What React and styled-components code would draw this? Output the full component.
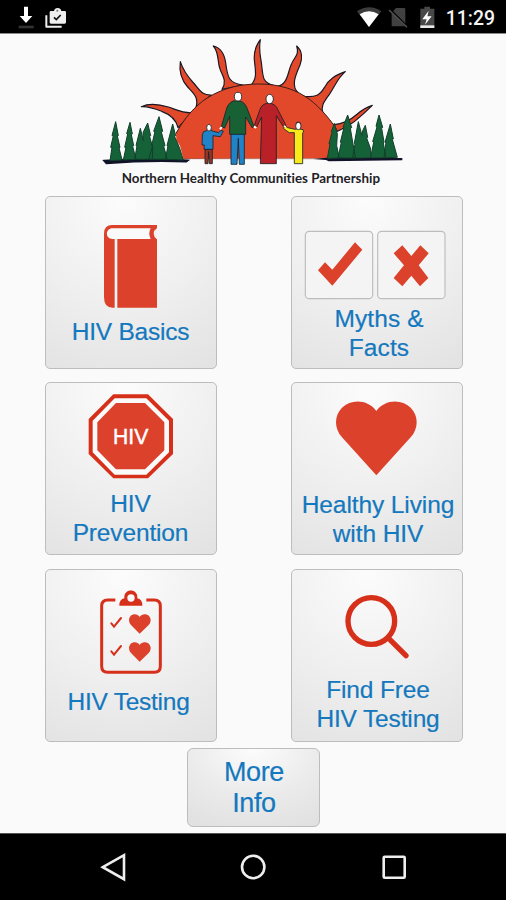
import React from "react";
import styled, { createGlobalStyle } from "styled-components";

const GlobalStyle = createGlobalStyle`
  * {
    box-sizing: border-box;
  }
  body {
    margin: 0;
    background-color: #fafafa;
    font-family: "Liberation Sans", Arial, sans-serif;
  }
`;

const Page = styled.div`
  display: flex;
  flex-direction: column;
  width: 506px;
  height: 900px;
  overflow: hidden;
  background-color: #fafafa;
`;

const StatusBar = styled.header`
  display: flex;
  justify-content: space-between;
  height: 34px;
  padding: 0 11px 0 16px;
  background-color: #000;
  border-bottom: 1px solid #8d8989;
`;

const StatusGroup = styled.div`
  display: flex;
`;

const Clock = styled.span`
  margin-left: 7px;
  font-family: Roboto, sans-serif;
  font-size: 19.4px;
  font-weight: 500;
  line-height: 37px;
  color: #f4f4f4;
`;

const Main = styled.main`
  display: flex;
  flex: 1;
  flex-direction: column;
  align-items: center;
`;

const Logo = styled.svg`
  width: 310px;
  height: 162px;
  margin-left: 4px;
  flex-shrink: 0;
`;

const Grid = styled.div`
  display: grid;
  grid-template-columns: 172px 172px;
  grid-template-rows: 186px 187px 179px;
  column-gap: 74px;
  margin-left: 2px;
`;

const Card = styled.button`
  display: flex;
  flex-direction: column;
  align-items: center;
  width: 172px;
  height: 173px;
  padding: 0;
  border: 1px solid #bdbdbd;
  border-radius: 5px;
  background: radial-gradient(ellipse 115% 125% at 45% 0, #fcfcfc 0%, #efefef 50%, #e0e0e0 100%);
  font-family: inherit;
`;

const SmallCard = styled(Card)`
  width: 133px;
  height: 79px;
  padding-top: 8px;
  border-radius: 6px;
  background: radial-gradient(ellipse 100% 120% at 50% 0, #fcfcfc 0%, #ebebeb 50%, #dfdfdf 100%);
`;

const Art = styled.svg`
  width: 170px;
  height: ${props => props.$height}px;
  flex-shrink: 0;
`;

const Label = styled.span`
  margin-top: ${props => (props.$large ? 0 : "1px")};
  margin-left: ${props => props.$indent || 0}px;
  font-size: ${props => (props.$large ? "27px" : "24.5px")};
  line-height: ${props => (props.$large ? "31px" : "28.7px")};
  letter-spacing: ${props => props.$tracking || 0}px;
  color: #1478be;
  -webkit-text-stroke: 0.2px #1478be;
  text-align: center;
  white-space: pre-line;
`;

const NavBar = styled.nav`
  display: grid;
  grid-template-columns: repeat(3, 140.5px);
  justify-content: center;
  justify-items: center;
  align-items: center;
  height: 67px;
  background-color: #000;
  border-top: 1px solid #555;
`;

const NavIcon = styled.svg`
  width: 30px;
  height: 30px;
  fill: none;
  stroke: #eee;
  stroke-width: 2.6;
`;

const RED = "#db412b";
const DARK_RED = "#d7301a";

const DownloadIcon = () => (
  <svg width="24" height="33" viewBox="48 0 72 99">
    <path d="M72 20h12v28h13L78 69 59 48h13z" fill="#fff" />
    <path d="M56 77h45v8H56z" fill="#333" />
  </svg>
);

const ShopIcon = () => (
  <svg width="32" height="33" viewBox="132 0 96 99">
    <path d="M151 46v34h46" fill="none" stroke="#eee" strokeWidth="6" strokeLinejoin="round" />
    <path d="M165 33h9c1-6 5-9 11-9s10 3 11 9h10q4 0 4 4v30q0 4-4 4h-41q-4 0-4-4V37q0-4 4-4z" fill="#eee" />
    <circle cx="184" cy="32" r="3" fill="#777" />
    <path d="M174 52l7 7 13-14" fill="none" stroke="#111" strokeWidth="5" />
  </svg>
);

const WifiIcon = () => (
  <svg width="28" height="33" viewBox="46 0 84 99">
    <path d="M52 34q37-25 73 0L88 81z" fill="#3c3c3c" />
    <path d="M60 43q28-18 57 0L88 81z" fill="#fff" />
  </svg>
);

const NoSimIcon = () => (
  <svg width="32" height="33" viewBox="134 0 96 99">
    <path d="M173 24h24q4 0 4 4v51h-41V38z" fill="#414141" />
    <path d="M153 27l56 56" stroke="#000" strokeWidth="7" />
    <path d="M152 30l54 52" stroke="#555" strokeWidth="4" />
  </svg>
);

const BatteryIcon = () => (
  <svg width="24" height="33" viewBox="230 0 72 99">
    <path d="M258 20h17v6h13v58h-42V26h12z" fill="#484848" />
    <path d="M246 76h42v8h-42z" fill="#e8e8e8" />
    <path d="M271 32l-19 26h13l-5 16 20-25h-13z" fill="#fff" />
  </svg>
);

const LeftTrees = "M30 380L36 340 32 340 40 305 36 305 47 263 55 305 52 306 60 340 57 341 66 378z M70 378L78 340 74 340 83 300 80 299 90 265 97 300 94 302 101 335 98 337 108 376z M104 376L111 335 108 335 121 283 130 320 129 296 143 267 152 305 149 308 158 340 157 376z M146 376L158 335 155 335 165 292 161 292 177 248 188 292 184 294 195 335 191 337 202 376z M196 376L204 335 201 335 218 270 227 305 224 308 238 340 250 378z";
const RightTrees = "M682 373L690 330 687 330 696 295 694 293 703 268 712 300 710 335 718 372z M714 372L724 325 721 325 732 280 729 279 743 243 755 281 751 283 759 330 767 372z M758 372L765 330 763 328 775 263 786 305 788 290 796 274 803 310 800 312 812 345 812 371z M812 371L821 325 818 323 831 279 828 277 837 243 848 280 845 283 852 324 850 327 858 371z M852 371L858 325 855 325 871 270 880 315 877 316 892 370z";

const SunLogo = () => (
  <Logo viewBox="0 0 930 486">
    <g fill="#e2492b" stroke="#191723" strokeWidth="3.5" strokeLinejoin="round">
      <path d="M234 281C229 257 215 243 185 232 160 222 140 217 124 218 148 207 174 210 205 219 230 227 246 238 278 236z" />
      <path d="M288 220C297 190 280 178 263 159 246 140 236 117 241 83 249 108 262 126 278 144 299 166 303 184 334 183z" />
      <path d="M366 166C380 145 371 130 361 108 350 80 359 58 340 36 364 41 373 60 377 86 382 125 384 149 430 153z" />
      <path d="M453 153C473 132 466 108 463 78 461 51 468 34 481 17 475 51 482 67 485 93 489 130 488 146 520 154z" />
      <path d="M530 158C564 151 562 118 574 91 582 69 599 65 590 36 608 51 607 75 600 93 588 121 571 156 595 177z" />
      <path d="M604 186C650 193 661 181 673 161 687 135 706 124 736 113 713 132 706 155 690 178 676 199 660 214 669 239z" />
      <path d="M695 273C733 269 751 258 772 240 787 227 801 219 817 214 801 230 784 246 763 263 744 278 727 284 712 292z" />
    </g>
    <path d="M250 374L240 335 229 319 228 298C247 264 268 236 294 213 328 182 384 155 450 151 510 146 571 158 615 187 648 207 684 247 710 286L704 372z" fill="#e2492b" />
    <path d="M228 298C247 264 268 236 294 213 328 182 384 155 450 151 510 146 571 158 615 187 648 207 684 247 710 286" fill="none" stroke="#3a1d1a" strokeWidth="3" />
    <path d="M250 374h450" stroke="#8f3524" strokeWidth="2" />
    <path d="M708 302l-3 42m-10-17l-5 31" stroke="#b33424" strokeWidth="2" />
    <path d="M12 380q120-9 252-1l-5 4q-120-4-240 5z" fill="#111329" stroke="#111329" strokeWidth="5" />
    <path d="M640 375l38-4 229 1v7l-221 3-8-4z" fill="#111329" />
    <path d={LeftTrees} fill="#166238" stroke="#113f2b" strokeWidth="3" />
    <path d={RightTrees} fill="#166238" stroke="#113f2b" strokeWidth="3" />
    <g stroke="#172229" strokeWidth="2.5" strokeLinejoin="round">
      <path d="M315 346h22v43h-9l-2-36-2 36h-9z" fill="#963425" />
      <path d="M319 290q-10 0-12 12l-1 31h7l-1 13h27v-41l22 3 9-16-7-3-7 7-16-4-7-3z" fill="#2083c8" />
      <ellipse cx="327" cy="281" rx="7" ry="10" fill="#fff" />
      <path d="M393 298h40v93h-15l-3-78-4 78h-18z" fill="#2083c8" />
      <path d="M399 201q-16 7-21 29l-14 48 10 4 15-35v54h48v-52l20 33 4-7-20-53q-8-20-25-22z" fill="#176134" />
      <ellipse cx="414" cy="188" rx="11" ry="13" fill="#fff" />
      <path d="M499 208q-16 5-20 21l-17 48 8 2 15-30-4 140h48V245l22 34 7-5-24-46q-6-17-23-20z" fill="#ba2027" />
      <ellipse cx="509" cy="195" rx="11" ry="14" fill="#fff" />
      <path d="M585 286l-22-5-8-6-4 9 17 12h15v93h25v-93l3-2-2-7-14-3z" fill="#f9e91b" />
      <ellipse cx="595" cy="276" rx="8" ry="11" fill="#fff" />
      <path d="M587 269q8-10 16 0" fill="none" />
    </g>
    <path d="M360 286l5-7m97-2l7 5m83-6l5 3" stroke="#fff" strokeWidth="6" />
    <text x="65" y="446" textLength="775" lengthAdjust="spacingAndGlyphs" fontFamily="Lato, sans-serif" fontSize="39" fontWeight="700" fill="#222126" style={{ fontVariantLigatures: "none" }}>
      Northern Healthy Communities Partnership
    </text>
  </Logo>
);

const BookArt = () => (
  <Art $height={120} viewBox="30 21 510 360">
    <path d="M363 105H228q-24 0-24 26v190q0 32 26 32h133V148q-19-15 0-33z" fill={RED} />
    <path d="M344 115H230c-23 0-23 32 0 32h114q-8-16 0-32z" fill="#fafafa" />
    <path d="M363 115q-20 13 0 33" fill="#f2f2f2" />
    <path d="M240 147v207" stroke="#f5f5f5" strokeWidth="8" />
  </Art>
);

const MythsArt = () => (
  <Art $height={107} viewBox="24 21 510 321">
    <g fill="#f4f4f4" stroke="#bdbdbd" strokeWidth="3.5">
      <rect x="64" y="124" width="202" height="202" rx="12" />
      <rect x="281" y="124" width="202" height="202" rx="12" />
    </g>
    <path d="M213 157l22 22-90 108-43-46 21-24 22 22z" fill={RED} />
    <path d="M355 166l27 32 27-32 25 24-30 36 29 38-25 25-26-32-27 32-26-25 31-38-31-36z" fill={RED} />
  </Art>
);

const StopArt = () => (
  <Art $height={106} viewBox="30 21 510 318">
    <path d="M232 55h104l75 74v105l-75 73H232l-74-73V129z" fill={DARK_RED} />
    <path d="M236 67h95l68 67v95l-68 67h-95l-66-67v-95z" fill="#fafafa" />
    <path d="M240 81h87l58 58v84l-58 57h-87l-56-57v-84z" fill={RED} />
    <text x="284" y="205" textAnchor="middle" textLength="106" lengthAdjust="spacingAndGlyphs" fontFamily="Liberation Sans, Arial, sans-serif" fontSize="67" fill="#fff" stroke="#fff" strokeWidth="1.5">HIV</text>
  </Art>
);

const HeartArt = () => (
  <Art $height={107} viewBox="24 21 510 321">
    <path d="M277 105C253 71 203 67 174 95 150 119 150 157 174 184L277 298 380 184C404 157 404 119 380 95 351 67 301 71 277 105z" fill={RED} />
  </Art>
);

const ClipboardArt = () => (
  <Art $height={117} viewBox="30 24 510 351">
    <path d="M238 114h-23q-18 0-18 18v181q0 18 18 18h140q18 0 18-18V132q0-18-18-18h-24" fill="none" stroke={DARK_RED} strokeWidth="9" />
    <path d="M250 131q0-20 15-22c-3-31 42-31 39 0q15 2 15 22z" fill={DARK_RED} />
    <circle cx="285" cy="108" r="11" fill="#fafafa" />
    {[0, 84].map(y => (
      <g key={y} transform={`translate(0 ${y})`}>
        <path d="M226 184l8 10 21-26" fill="none" stroke={DARK_RED} strokeWidth="6" strokeLinecap="round" />
        <path d="M311 165c-8-14-32-10-32 10q0 8 6 14l26 26 27-26q6-6 6-14c0-20-25-24-33-10z" fill={RED} />
      </g>
    ))}
  </Art>
);

const SearchArt = () => (
  <Art $height={105} viewBox="24 24 510 315">
    <g fill="none" stroke={DARK_RED} strokeWidth="16" strokeLinecap="round">
      <circle cx="262" cy="177" r="70" />
      <path d="M314 229l52 52" />
    </g>
  </Art>
);

const menu = [
  { label: "HIV Basics", Icon: BookArt, tracking: -0.25, indent: -1 },
  { label: "Myths &\nFacts", Icon: MythsArt, tracking: 0.1, indent: 4 },
  { label: "HIV\nPrevention", Icon: StopArt, tracking: -0.15, indent: -1 },
  { label: "Healthy Living\nwith HIV", Icon: HeartArt, tracking: -0.1, indent: 2 },
  { label: "HIV Testing", Icon: ClipboardArt, tracking: -0.25, indent: -5 },
  { label: "Find Free\nHIV Testing", Icon: SearchArt, tracking: -0.15, indent: 2 },
];

const App = () => {
  return (
    <>
      <GlobalStyle />
      <Page>
        <StatusBar>
          <StatusGroup>
            <DownloadIcon />
            <ShopIcon />
          </StatusGroup>
          <StatusGroup>
            <WifiIcon />
            <NoSimIcon />
            <BatteryIcon />
            <Clock>11:29</Clock>
          </StatusGroup>
        </StatusBar>
        <Main>
          <SunLogo />
          <Grid>
            {menu.map(({ label, Icon, tracking, indent }) => (
              <Card key={label}>
                <Icon />
                <Label $tracking={tracking} $indent={indent}>{label}</Label>
              </Card>
            ))}
          </Grid>
          <SmallCard>
            <Label $large $tracking={-0.4} $indent={2}>{"More\nInfo"}</Label>
          </SmallCard>
        </Main>
        <NavBar>
          <NavIcon viewBox="0 0 30 30">
            <path d="M4.8 15.2L26 3.2v24z" />
          </NavIcon>
          <NavIcon viewBox="0 0 30 30">
            <circle cx="15.2" cy="15" r="11.2" />
          </NavIcon>
          <NavIcon viewBox="0 0 30 30">
            <rect x="4.7" y="4.7" width="21" height="21" rx="1" />
          </NavIcon>
        </NavBar>
      </Page>
    </>
  );
};

export default App;
